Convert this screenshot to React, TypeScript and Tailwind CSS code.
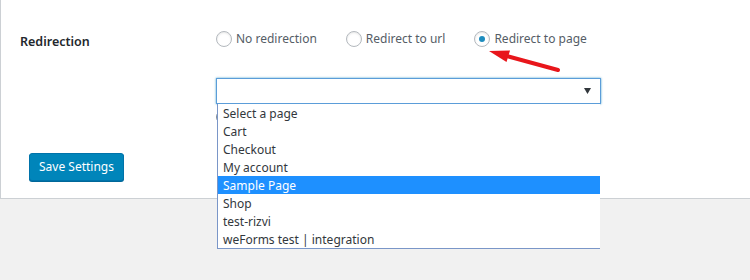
import React from 'react';

const pages = [
  'Select a page',
  'Cart',
  'Checkout',
  'My account',
  'Sample Page',
  'Shop',
  'test-rizvi',
  'weForms test | integration',
];

function Radio({ label, checked }: { label: string; checked?: boolean }) {
  return (
    <label className="flex items-center gap-[4px] text-[#555d66]">
      <span className="w-[16px] h-[16px] rounded-full border border-[#b4b9be] bg-white shadow-[inset_0_1px_2px_rgba(0,0,0,0.1)] flex items-center justify-center">
        {checked && <span className="w-[6px] h-[6px] rounded-full bg-[#1e8cbe]" />}
      </span>
      <span className="pt-[1px]">{label}</span>
    </label>
  );
}

export default function App() {
  return (
    <div
      className="relative w-[750px] h-[280px] overflow-hidden bg-[#f1f1f1] text-[12px] leading-[18px]"
      style={{ fontFamily: '"Noto Sans", "Open Sans", sans-serif' }}
    >
      <div className="h-[199px] bg-white border-l border-b border-[#ccd0d4]">
        <div className="flex pt-[29px]">
          <div className="w-[215px] pl-[19px] pt-[4px] text-[12.5px] font-semibold text-[#23282d]">
            Redirection
          </div>
          <div>
            <div className="flex gap-[29px] text-[12px]">
              <Radio label="No redirection" />
              <Radio label="Redirect to url" />
              <Radio label="Redirect to page" checked />
            </div>
            <div className="relative mt-[30px] w-[385px]">
              <span className="absolute left-0 top-[32px] w-[14px] h-[14px] rounded-full border border-[#7e8993]" />
              <div className="relative h-[26px] border border-[#5b9dd9] bg-white shadow-[0_0_2px_rgba(30,140,190,0.8)] flex items-center justify-end pr-[9px]">
                <svg width="7" height="6" viewBox="0 0 7 6">
                  <path d="M0 0 H7 L3.5 6 Z" fill="#32373c" />
                </svg>
              </div>
              <ul className="absolute z-10 left-[1px] top-[26px] w-[383px] bg-white border-l border-b border-[#7a96c8] text-[#32373c]">
                {pages.map((p) => (
                  <li
                    key={p}
                    className={
                      p === 'Sample Page'
                        ? 'h-[18px] leading-[20px] pl-[5px] bg-[#1e90ff] text-white'
                        : 'h-[18px] leading-[20px] pl-[5px]'
                    }
                  >
                    {p}
                  </li>
                ))}
              </ul>
            </div>
          </div>
        </div>
        <div className="pl-[28px] mt-[49px]">
          <button className="h-[28px] px-[9px] rounded-[3px] bg-[#0085ba] border border-[#0073aa] shadow-[0_1px_0_#006799] text-white text-[12px]">
            Save Settings
          </button>
        </div>
      </div>
      <svg className="absolute left-0 top-0 pointer-events-none" width="750" height="280">
        <line x1="558" y1="70" x2="505" y2="55.5" stroke="#e8161b" strokeWidth="4" strokeLinecap="round" />
        <polygon points="489,51 510,50.5 506.5,62" fill="#e8161b" />
      </svg>
    </div>
  );
}
